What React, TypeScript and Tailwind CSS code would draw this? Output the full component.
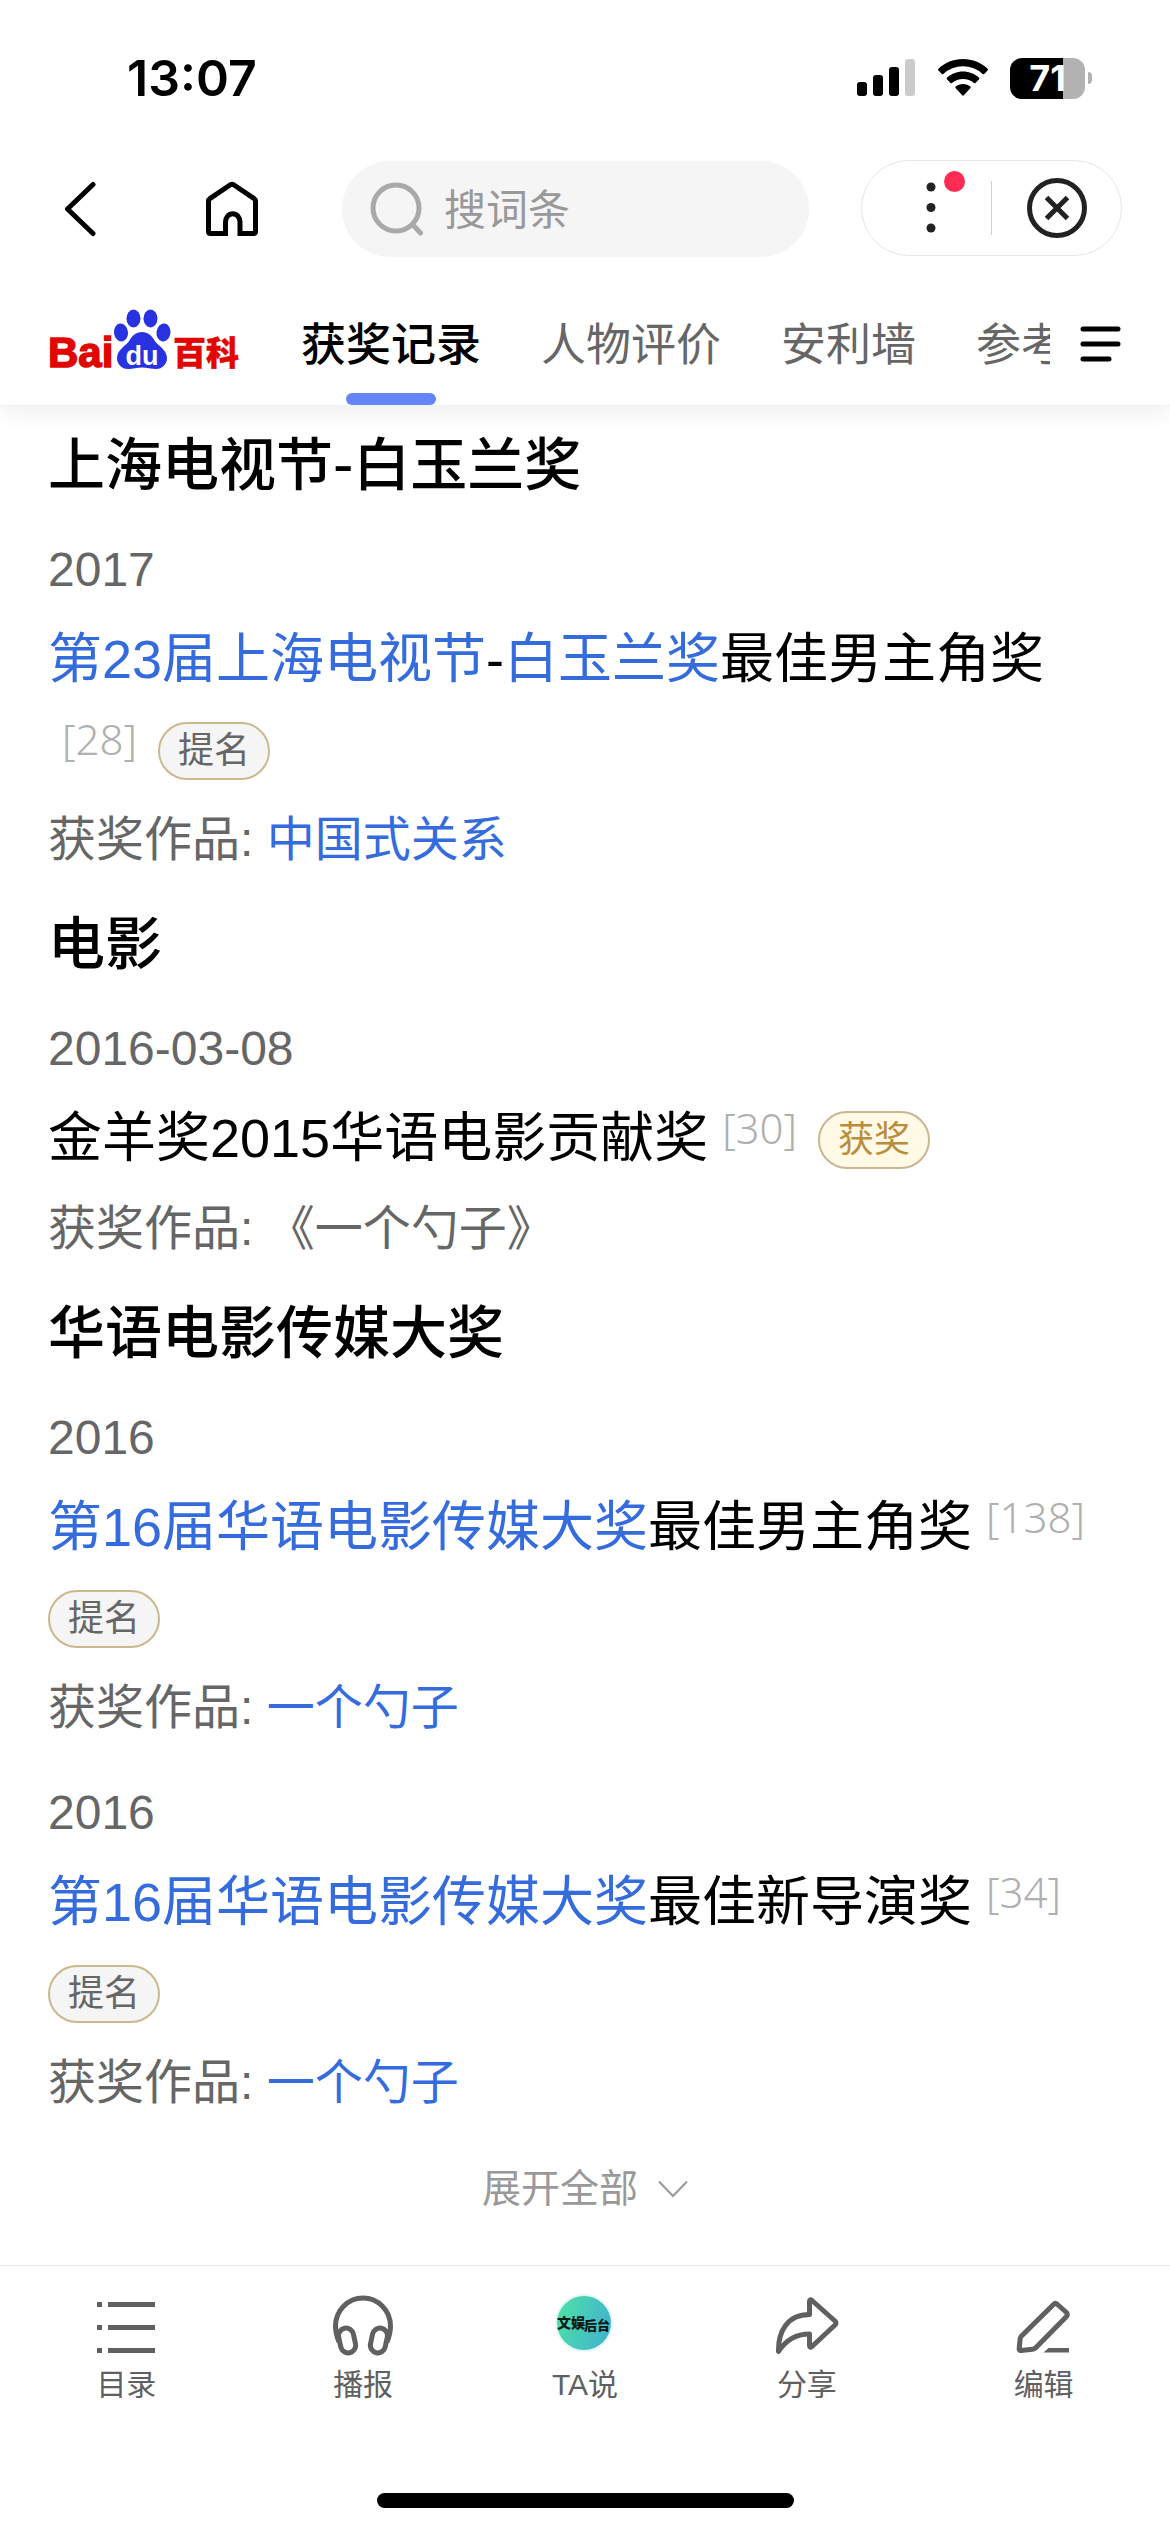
import type { ReactNode } from 'react';

type Part = { text: string; link?: boolean };

type Award = {
  date: string;
  title: Part[];
  refNo: string;
  badge: '提名' | '获奖';
  work: Part;
};

type Group = { name: string; awards: Award[] };

const tabs = ['获奖记录', '人物评价', '安利墙', '参考资料'];

const groups: Group[] = [
  {
    name: '上海电视节-白玉兰奖',
    awards: [
      {
        date: '2017',
        title: [
          { text: '第23届上海电视节', link: true },
          { text: '-' },
          { text: '白玉兰奖', link: true },
          { text: '最佳男主角奖' },
        ],
        refNo: '[28]',
        badge: '提名',
        work: { text: '中国式关系', link: true },
      },
    ],
  },
  {
    name: '电影',
    awards: [
      {
        date: '2016-03-08',
        title: [{ text: '金羊奖2015华语电影贡献奖' }],
        refNo: '[30]',
        badge: '获奖',
        work: { text: '《一个勺子》' },
      },
    ],
  },
  {
    name: '华语电影传媒大奖',
    awards: [
      {
        date: '2016',
        title: [{ text: '第16届华语电影传媒大奖', link: true }, { text: '最佳男主角奖' }],
        refNo: '[138]',
        badge: '提名',
        work: { text: '一个勺子', link: true },
      },
      {
        date: '2016',
        title: [{ text: '第16届华语电影传媒大奖', link: true }, { text: '最佳新导演奖' }],
        refNo: '[34]',
        badge: '提名',
        work: { text: '一个勺子', link: true },
      },
    ],
  },
];

function StatusBar() {
  return (
    <div className="flex h-[60px] items-center justify-between pr-[78px] pl-[127px]">
      <span className="font-['Inter',sans-serif] text-[50px] leading-[60px] font-semibold">13:07</span>
      <div className="flex items-center">
        <svg width="58" height="38" viewBox="0 0 58 38" aria-hidden="true">
          <rect x="0" y="23" width="10" height="14" rx="3" />
          <rect x="16" y="16" width="10" height="21" rx="3" />
          <rect x="32" y="8" width="10" height="29" rx="3" />
          <rect x="48" y="0" width="10" height="37" rx="3" fill="#cbcbcb" />
        </svg>
        <svg className="ml-[23px]" width="50" height="38" viewBox="0 0 50 38" aria-hidden="true">
          <path d="M25 0C34.5 0 43.3 3.600 49.600 9.800Q50.300 10.600 49.600 11.400L46.200 15Q45.500 15.700 44.700 15A29 29 0 0 0 5.300 15Q4.500 15.700 3.800 15L.4 11.400Q-.3 10.600 .4 9.800C6.700 3.600 15.500 0 25 0Z" />
          <path d="M25 12.500C31.200 12.500 36.900 14.900 41.100 18.700Q41.800 19.500 41.100 20.300L37.500 24Q36.800 24.700 36 24A16.800 16.800 0 0 0 14 24Q13.200 24.700 12.500 24L8.900 20.300Q8.200 19.500 8.900 18.700C13.100 14.900 18.800 12.500 25 12.500Z" />
          <path d="M25 25C28 25 30.500 26 32.300 27.600Q33.100 28.400 32.300 29.200L25.800 36.300Q25 37 24.200 36.300L17.700 29.200Q16.900 28.400 17.700 27.600C19.500 26 22 25 25 25Z" />
        </svg>
        <div className="ml-[22px] flex items-center gap-[3px]">
          <div className="flex h-[41px] w-[75px] items-center justify-center rounded-[12px] bg-linear-to-r from-black from-71% to-[#b2b2b2] to-71%">
            <span className="font-['Inter',sans-serif] text-[36px] leading-[41px] font-bold text-white">71</span>
          </div>
          <div className="h-[12px] w-1 rounded-r-full bg-[#b2b2b2]" />
        </div>
      </div>
    </div>
  );
}

function NavRow() {
  return (
    <div className="mt-[52px] flex h-[98px] items-center px-12">
      <button type="button" aria-label="返回" className="flex w-[64px] justify-center">
        <svg width="32" height="56" viewBox="0 0 32 56" fill="none" stroke="#000" strokeWidth="5" strokeLinecap="round" strokeLinejoin="round">
          <path d="M29 3.500L3.500 28L29 52.500" />
        </svg>
      </button>
      <button type="button" aria-label="首页" className="ml-[93px]">
        <svg width="54" height="56" viewBox="0 0 54 56" fill="none" stroke="#000" strokeWidth="5" strokeLinejoin="round">
          <path d="M21 52.500H5.500Q3.500 52.500 3.500 50.500V20.500Q3.500 18.500 5.200 17.300L25 4Q27 2.700 29 4L48.800 17.300Q50.500 18.500 50.500 20.500V50.500Q50.500 52.500 48.500 52.500H33" />
          <path d="M20.500 55V41A6.500 7.500 0 0 1 35 41V55" />
        </svg>
      </button>
      <label className="ml-[83px] flex h-24 min-w-0 flex-1 items-center gap-5 rounded-full bg-[#f5f5f5] pl-7">
        <svg className="shrink-0" width="54" height="54" viewBox="0 0 54 54" fill="none" stroke="#a9a9a9" strokeWidth="5" strokeLinecap="round" aria-hidden="true">
          <circle cx="26" cy="26" r="23" />
          <path d="M43 43L50.500 51" />
        </svg>
        <input
          type="text"
          aria-label="搜词条"
          placeholder="搜词条"
          className="w-full min-w-0 bg-transparent pt-1 text-[42px] leading-[60px] outline-none placeholder:text-[#999]"
        />
      </label>
      <div className="ml-[52px] flex h-24 w-[261px] items-center self-start rounded-full border border-[#e6e6e6]">
        <button type="button" aria-label="更多" className="relative flex h-full flex-1 items-center justify-center">
          <svg className="ml-2" width="10" height="52" viewBox="0 0 10 52" fill="#222">
            <circle cx="5" cy="5" r="4.500" />
            <circle cx="5" cy="25.500" r="4.500" />
            <circle cx="5" cy="46" r="4.500" />
          </svg>
          <span className="absolute top-[10px] right-[26px] h-[21px] w-[21px] rounded-full bg-[#ff2b52]" />
        </button>
        <div className="h-[54px] w-px bg-[#d0d0d0]" />
        <button type="button" aria-label="关闭" className="flex h-full flex-1 items-center justify-center">
          <svg width="60" height="60" viewBox="0 0 60 60" fill="none" stroke="#222" strokeWidth="5">
            <circle cx="30" cy="30" r="27.500" />
            <path d="M19.500 19.500L40.500 40.500M40.500 19.500L19.500 40.500" />
          </svg>
        </button>
      </div>
    </div>
  );
}

function Logo() {
  return (
    <a href="#" aria-label="百度百科" className="shrink-0">
      <svg width="192" height="70" viewBox="0 0 192 70">
        <g fill="#2932e1">
          <ellipse cx="85.500" cy="9.500" rx="7" ry="9" />
          <ellipse cx="102.500" cy="9.500" rx="7" ry="9" />
          <ellipse cx="73" cy="23.500" rx="7" ry="9" transform="rotate(-8 73 23.500)" />
          <ellipse cx="115.500" cy="23.500" rx="7" ry="9" transform="rotate(8 115.500 23.500)" />
          <path d="M94 23C100 23 104 27 106.500 31.500C109 36 119 40.500 119 49C119 55 114.500 60 108 60C103 60 99 58.500 94 58.500C89 58.500 85 60 80 60C73.500 60 69 55 69 49C69 40.500 79 36 81.500 31.500C84 27 88 23 94 23Z" />
        </g>
        <g fill="#e10601" stroke="#e10601">
          <text x="0" y="58" fontFamily="Liberation Sans, sans-serif" fontSize="42" fontWeight="700" strokeWidth="1.500">
            Bai
          </text>
          <text x="125" y="56" fontFamily="Noto Sans CJK SC, sans-serif" fontSize="33" fontWeight="900" strokeWidth="0.500">
            百科
          </text>
        </g>
        <text x="94" y="56" textAnchor="middle" fontFamily="Liberation Sans, sans-serif" fontSize="27" fontWeight="700" fill="#fff">
          du
        </text>
      </svg>
    </a>
  );
}

function TabBar() {
  return (
    <div className="mt-[25px] flex h-[122px] items-center px-12">
      <Logo />
      <nav className="ml-[61px] flex h-full min-w-0 flex-1 gap-[60px] overflow-hidden whitespace-nowrap">
        {tabs.map((tab, i) => (
          <a
            key={tab}
            href="#"
            className={`relative flex shrink-0 items-center pt-1 text-[45px] leading-[64px] ${
              i === 0 ? 'font-medium text-black' : 'text-[#666]'
            }`}
          >
            {tab}
            {i === 0 && (
              <span className="absolute bottom-0 left-1/2 h-3 w-[90px] -translate-x-1/2 rounded-full bg-[#6485f7]" />
            )}
          </a>
        ))}
      </nav>
      <button type="button" aria-label="目录菜单" className="ml-[30px]">
        <svg width="42" height="36" viewBox="0 0 42 36" stroke="#000" strokeWidth="5" strokeLinecap="round">
          <path d="M3 3H38M3 18H38M3 33H29" />
        </svg>
      </button>
    </div>
  );
}

function Badge({ kind }: { kind: Award['badge'] }) {
  return (
    <span
      className={`inline-flex h-[58px] items-center rounded-full border-2 px-[18px] align-[5px] text-[36px] leading-none ${
        kind === '获奖' ? 'border-[#c9b793] bg-[#fff9e5] text-[#b98d3c]' : 'border-[#c9b98c] bg-[#f5f5f5] text-[#666]'
      }`}
    >
      {kind}
    </span>
  );
}

function Text({ part }: { part: Part }) {
  if (!part.link) return <>{part.text}</>;
  return (
    <a href="#" className="text-[#346bdd]">
      {part.text}
    </a>
  );
}

function AwardItem({ award }: { award: Award }) {
  return (
    <article>
      <p className="text-[48px] leading-[72px] text-[#666]">{award.date}</p>
      <h3 className="mt-2 text-[54px] leading-[90px]">
        {award.title.map((part) => (
          <Text key={part.text} part={part} />
        ))}
        <a href="#" className="mr-1.5 ml-3.5 inline-block align-[13px] font-['Noto_Sans',sans-serif] text-[42px] leading-none font-light text-[#b0b0b0]">
          {award.refNo}
        </a>{' '}
        <Badge kind={award.badge} />
      </h3>
      <p className="mt-[10px] text-[48px] leading-[72px] text-[#666]">
        获奖作品: <Text part={award.work} />
      </p>
    </article>
  );
}

function ToolItem({ label, children }: { label: string; children: ReactNode }) {
  return (
    <button type="button" className="flex flex-1 flex-col items-center text-[#5f6062] nth-3:w-[207px] nth-3:flex-none">
      {children}
      <span className="mt-[10px] text-[30px] leading-[42px]">{label}</span>
    </button>
  );
}

function Toolbar() {
  return (
    <footer className="border-t border-[#e5e5e5] pt-7">
      <div className="flex px-2">
        <ToolItem label="目录">
          <svg width="60" height="60" viewBox="0 0 60 60" fill="currentColor">
            <path d="M1 8h5v5H1zM12 8h47v5H12zM1 31h5v5H1zM12 31h47v5H12zM1 54h5v5H1zM12 54h47v5H12z" />
          </svg>
        </ToolItem>
        <ToolItem label="播报">
          <svg width="60" height="62" viewBox="0 0 60 62" className="-mb-0.5" fill="none" stroke="currentColor" strokeWidth="5">
            <path d="M6 48C3.500 42 2.500 37 2.500 32A27.500 28 0 0 1 57.500 32C57.500 37 56.500 42 54 48" />
            <rect x="6.500" y="34" width="15" height="25" rx="7.500" transform="rotate(-12 14 46)" />
            <rect x="38.500" y="34" width="15" height="25" rx="7.500" transform="rotate(12 46 46)" />
          </svg>
        </ToolItem>
        <ToolItem label="TA说">
          <svg width="60" height="60" viewBox="0 0 60 60">
            <defs>
              <linearGradient id="avatar" x1="0" y1="0" x2="1" y2="0.300">
                <stop offset="0" stopColor="#4de3a6" />
                <stop offset="1" stopColor="#43b7c9" />
              </linearGradient>
            </defs>
            <circle cx="29" cy="29" r="29" fill="#e4f7f5" />
            <circle cx="29" cy="29" r="27" fill="url(#avatar)" />
            <text x="2" y="34" fontFamily="Noto Sans CJK SC, sans-serif" fontSize="14" fontWeight="900" fill="#0b1715">
              文娱
            </text>
            <text x="29" y="36" fontFamily="Noto Sans CJK SC, sans-serif" fontSize="13" fontWeight="900" fill="#0b1715">
              后台
            </text>
          </svg>
        </ToolItem>
        <ToolItem label="分享">
          <svg width="64" height="60" viewBox="0 0 64 60" fill="none" stroke="currentColor" strokeWidth="5" strokeLinejoin="round">
            <path d="M34.500 7.500Q34.500 4.500 37 6.500L60 27Q62 29 60 31L37 52.500Q34.500 54.500 34.500 51.500V40C22 40 11 46 3.500 57.500C3 38 12 20.500 34.500 20.500Z" />
          </svg>
        </ToolItem>
        <ToolItem label="编辑">
          <svg width="60" height="60" viewBox="0 0 60 60" fill="none" stroke="currentColor" strokeWidth="5" strokeLinejoin="round">
            <path d="M39.500 10.500Q41.500 8.500 43.500 10.500L52.500 18.500Q54 20.500 52.500 22.500L22 53.500Q20.500 55 18.500 55.200L7 56.500Q5 56.700 5.200 54.500L6.200 44.500Q6.500 43 7.500 42Z" />
            <path d="M29.500 58.500L34.500 54H55V58.500Z" fill="currentColor" stroke="none" />
          </svg>
        </ToolItem>
      </div>
      <div className="mx-auto mt-[87px] mb-6 h-[15px] w-[417px] rounded-full bg-black" />
    </footer>
  );
}

export default function App() {
  return (
    <div lang="zh-CN" className="bg-white font-['Liberation_Sans','Noto_Sans_CJK_SC',sans-serif] text-black">
      <header className="relative border-b border-[#f1f1f1] pt-12 shadow-[0_8px_20px_rgba(0,0,0,0.06)]">
        <StatusBar />
        <NavRow />
        <TabBar />
      </header>

      <main className="px-12 pt-[7px]">
        <div className="flex flex-col gap-4">
          {groups.map((group) => (
            <section key={group.name}>
              <h2 className="mb-[27px] font-['Noto_Sans_CJK_SC',sans-serif] text-[57px] leading-[94px] font-medium">
                {group.name}
              </h2>
              <div className="flex flex-col gap-[33px]">
                {group.awards.map((award) => (
                  <AwardItem key={award.refNo} award={award} />
                ))}
              </div>
            </section>
          ))}
        </div>

        {/* 展开全部 */}
        <button type="button" className="mx-auto mt-10 mb-[46px] flex items-center gap-5 text-[39px] leading-[60px] text-[#999]">
          展开全部
          <svg width="30" height="18" viewBox="0 0 30 18" fill="none" stroke="currentColor" strokeWidth="2">
            <path d="M1 1.500L15 16L29 1.500" />
          </svg>
        </button>
      </main>

      <Toolbar />
    </div>
  );
}
